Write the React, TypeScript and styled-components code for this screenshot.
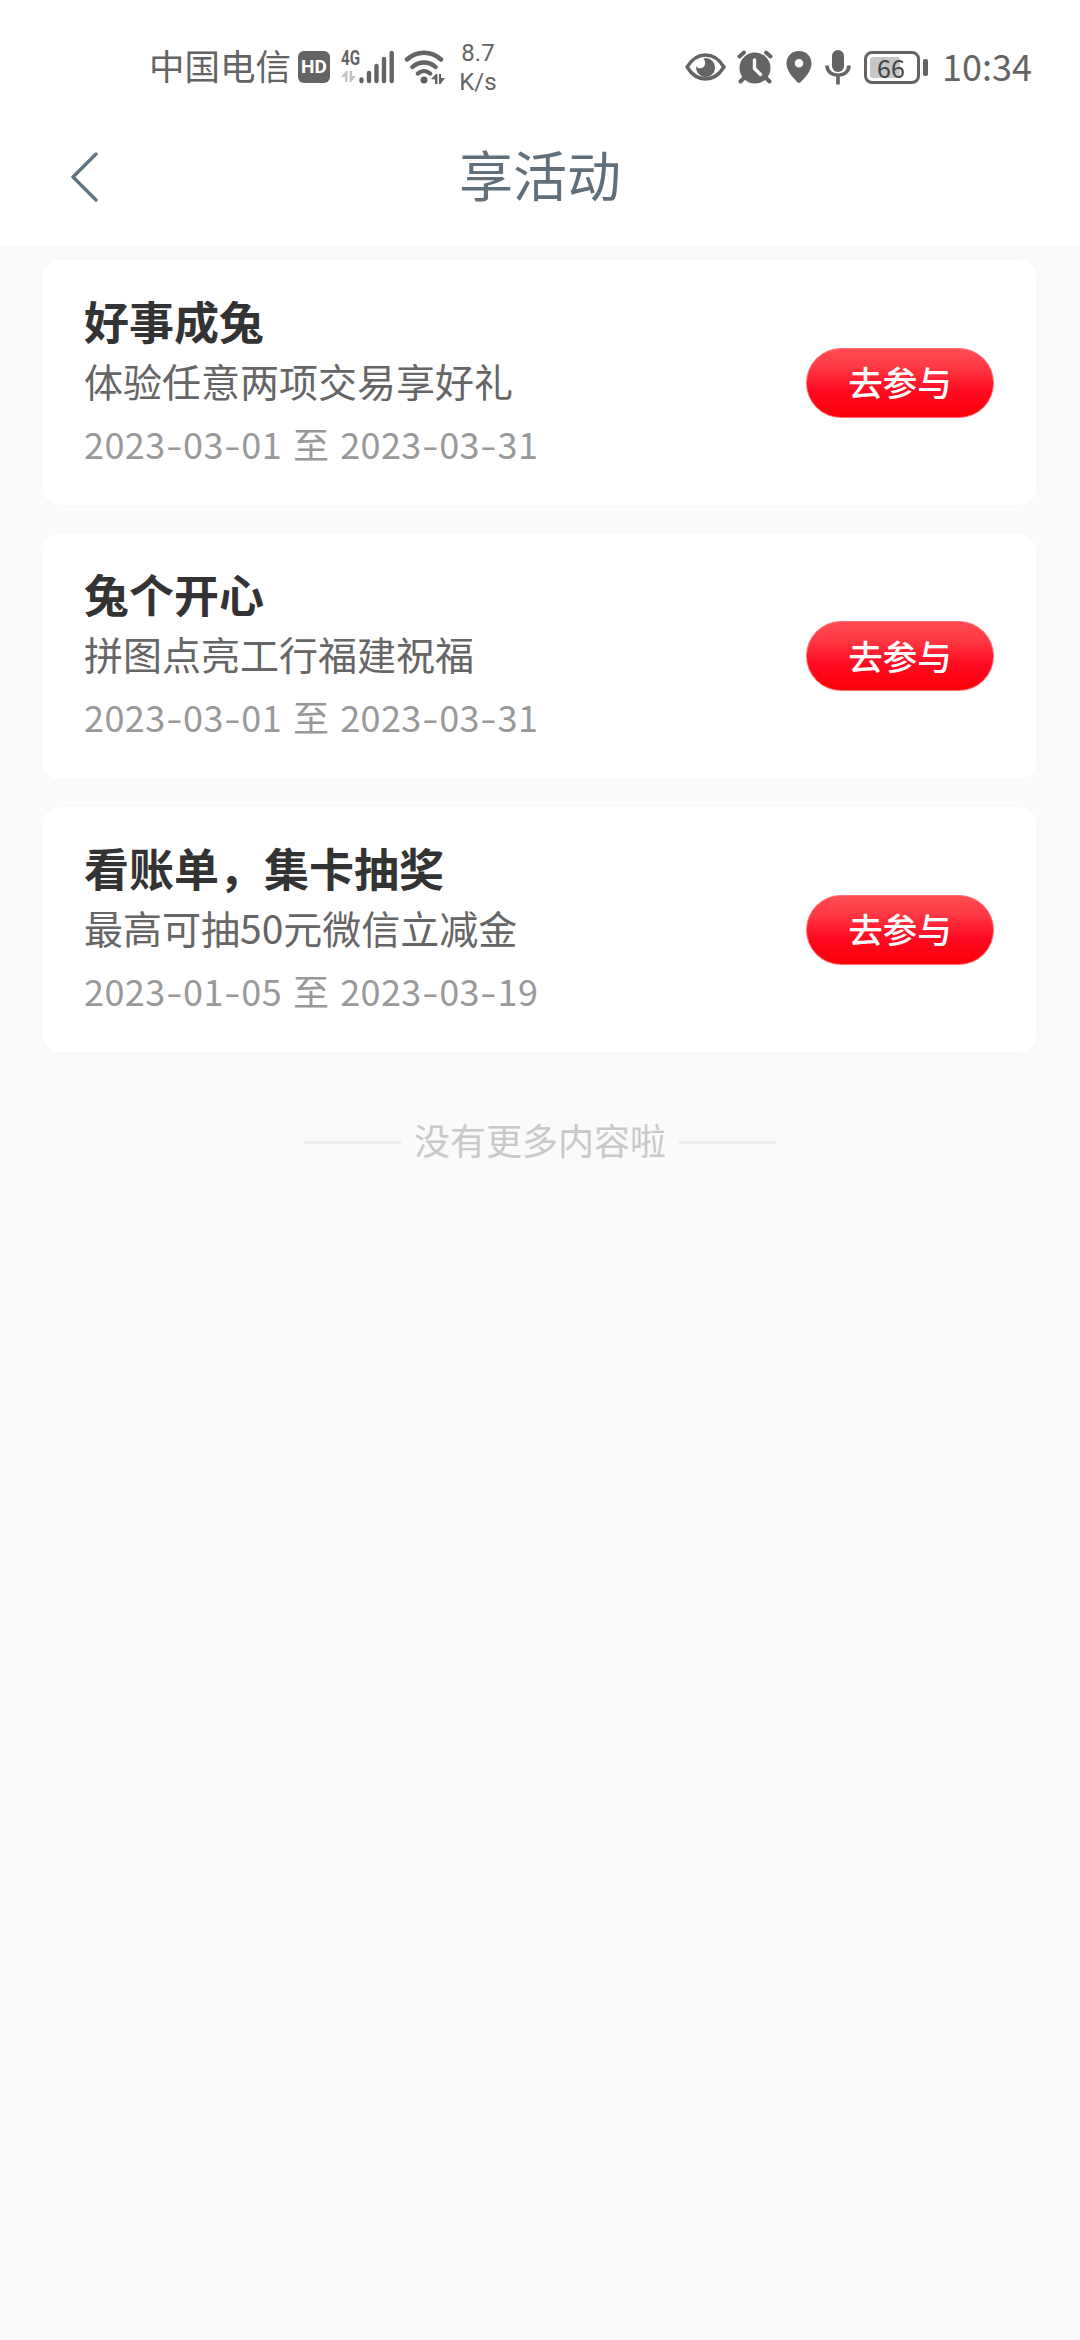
import React from "react";
import styled, { createGlobalStyle } from "styled-components";

const GlobalStyle = createGlobalStyle`
  * { box-sizing: border-box; }
  body {
    margin: 0;
    background: #fafafa;
    font-family: "Noto Sans CJK SC", "Noto Sans", sans-serif;
  }
`;

const INK = "#646464";

const Page = styled.div`
  width: 1080px;
  min-height: 2340px;
  display: flex;
  flex-direction: column;
  background: #fafafa;
`;

const Top = styled.header`
  height: 246px;
  background: #fff;
`;

const StatusBar = styled.div`
  height: 106px;
  padding: 28px 48px 0 149px;
  display: flex;
  justify-content: space-between;
  align-items: flex-start;
  color: ${INK};
`;

const StatusGroup = styled.div`
  height: 78px;
  display: flex;
  align-items: center;
`;

const StatusText = styled.span`
  font-size: 36px;
  line-height: 48px;
  white-space: nowrap;
  margin-top: -4px;
`;

const Carrier = styled(StatusText)`
  width: 149px;
  font-size: 35.5px;
`;

const Clock = styled(StatusText)`
  margin-left: 14px;
  width: 90px;
`;

const HdBadge = styled.span`
  width: 32px;
  height: 32px;
  border-radius: 6px;
  background: ${INK};
  color: #fff;
  font: 700 19px/32px Roboto, sans-serif;
  text-align: center;
`;

const SignalBlock = styled.div`
  display: flex;
  margin-left: 11px;
  width: 54px;
  height: 34px;
`;

const NetworkColumn = styled.div`
  display: flex;
  flex-direction: column;
  width: 18px;
`;

const NetworkType = styled.span`
  font: 700 20px/16px Roboto, sans-serif;
  transform: scaleX(0.76);
  transform-origin: left;
  margin-bottom: 5px;
`;

const Speed = styled.div`
  margin-left: 12px;
  margin-top: 1px;
  width: 40px;
  font: 400 24px/28.5px Roboto, sans-serif;
  text-align: center;
`;

const Icon = styled.svg<{ $left?: number }>`
  display: block;
  flex: none;
  margin-left: ${(p) => p.$left ?? 0}px;
`;

const Battery = styled.div`
  display: flex;
  align-items: center;
  margin-left: 13px;
`;

const BatteryCase = styled.div`
  width: 56px;
  height: 33px;
  padding: 3px;
  border: 3px solid ${INK};
  border-radius: 8px;
`;

const BatteryLevel = styled.div`
  width: 30px;
  height: 21px;
  border-radius: 3px;
  background: #c6c6c6;
  color: #444;
  font: 400 25px/20px "Noto Sans CJK SC", sans-serif;
  padding-left: 7px;
`;

const BatteryTip = styled.div`
  width: 5px;
  height: 17px;
  margin-left: 3px;
  border-radius: 2px;
  background: ${INK};
`;

const NavBar = styled.nav`
  height: 140px;
  display: grid;
  grid-template-columns: 150px 1fr 150px;
  align-items: center;
`;

const BackButton = styled.button`
  border: 0;
  padding: 2px 0 0 70px;
  background: none;
`;

const Title = styled.h1`
  margin: 0 0 5px;
  color: #5f707c;
  font-size: 54px;
  line-height: 80px;
  font-weight: 400;
  text-align: center;
`;

const List = styled.main`
  display: flex;
  flex-direction: column;
  gap: 28.7px;
  padding: 14px 44px 0 43px;
`;

const Card = styled.article`
  height: 245px;
  padding: 0 42px 0 41px;
  display: flex;
  align-items: center;
  justify-content: space-between;
  border-radius: 16px;
  background: #fff;
  box-shadow: 0 0 4px rgba(0, 0, 0, 0.015);
`;

const CardText = styled.div`
  display: flex;
  flex-direction: column;
  white-space: nowrap;
`;

const CardTitle = styled.h2`
  margin: 0;
  color: #333;
  font-size: 45px;
  line-height: 60px;
  font-weight: 700;
`;

const CardDescription = styled.p`
  margin: 0;
  color: #666;
  font-size: 39px;
  line-height: 58px;
`;

const CardDate = styled.p`
  margin: 0;
  padding-top: 2px;
  color: #999;
  font-size: 36px;
  line-height: 64px;
  letter-spacing: 0.4px;
  word-spacing: 2.4px;
`;

const Dash = styled.span`
  display: inline-block;
  width: 17.5px;
  text-align: center;
  transform: scaleX(1.3);
`;

const JoinButton = styled.button`
  width: 188px;
  height: 70px;
  border: 1px solid #ff6a6e;
  border-radius: 35px;
  padding: 0 0 3px;
  background: linear-gradient(180deg, #ff4b51 0%, #ff3b45 25%, #ff0a22 62%, #fb0008 100%);
  color: #fff;
  font: 500 34.5px/50px "Noto Sans CJK SC", sans-serif;
`;

const EndNote = styled.footer`
  margin-top: 60px;
  display: flex;
  align-items: center;
  justify-content: center;
  gap: 13px;
  color: #c9c9c9;
  font-size: 36px;
  line-height: 54px;

  &::before,
  &::after {
    content: "";
    width: 97px;
    height: 3px;
    margin-top: 7px;
    background: #eee;
  }
`;

const activities = [
  { title: "好事成兔", text: "体验任意两项交易享好礼", from: "2023-03-01", to: "2023-03-31" },
  { title: "兔个开心", text: "拼图点亮工行福建祝福", from: "2023-03-01", to: "2023-03-31" },
  { title: "看账单，集卡抽奖", text: "最高可抽50元微信立减金", from: "2023-01-05", to: "2023-03-19" },
];

function DateText({ value }: { value: string }) {
  return (
    <>
      {value.split("-").map((part, i) => (
        <React.Fragment key={i}>
          {i > 0 && <Dash>-</Dash>}
          {part}
        </React.Fragment>
      ))}
    </>
  );
}

function StatusIcons() {
  return (
    <>
      <Icon width="41" height="28" viewBox="0 0 41 28" fill="none">
        <path d="M2 14C7 6 13 2 20.500 2S34 6 39 14C34 22 28 26 20.500 26S7 22 2 14Z" stroke={INK} strokeWidth="3.400" strokeLinejoin="round" />
        <path d="M20.500 5a9.500 9.500 0 1 1-9.300 8c1.400 2.500 4.400 3 6.700 1.500 2.600-1.700 3.400-6 .4-8.800Z" fill={INK} />
      </Icon>
      <Icon $left={11} width="36" height="34" viewBox="0 0 36 34" fill="none" stroke={INK} strokeLinecap="round">
        <circle cx="18" cy="18" r="15.500" fill={INK} stroke="none" />
        <path d="M2.500 6.500 7 2.500M33.500 6.500 29 2.500" strokeWidth="4" />
        <path d="M7 28l-3.500 3.500M29 28l3.500 3.500" strokeWidth="4" />
        <path d="M17.500 10v8.500l6 6" stroke="#fff" strokeWidth="3.400" />
      </Icon>
      <Icon $left={13} width="26" height="32" viewBox="0 0 26 32">
        <path fillRule="evenodd" fill={INK} d="M13 0C5.500 0 .5 5.500.5 12.500.5 20 6.500 26 11.200 31q1.800 1.700 3.600 0C19.500 26 25.500 20 25.500 12.500 25.500 5.500 20.500 0 13 0Zm0 8a4 4 0 0 1 0 8.500A4 4 0 0 1 13 8Z" />
      </Icon>
      <Icon $left={13} width="26" height="35" viewBox="0 0 26 35" fill="none">
        <rect x="7" y="0" width="12" height="22" rx="6" fill={INK} />
        <path d="M2 15.500c0 13 22 13 22 0M13 26v8.500" stroke={INK} strokeWidth="3.600" />
      </Icon>
    </>
  );
}

export default function App() {
  return (
    <Page>
      <GlobalStyle />
      <Top>
        <StatusBar>
          <StatusGroup>
            <Carrier>中国电信</Carrier>
            <HdBadge>HD</HdBadge>
            <SignalBlock>
              <NetworkColumn>
                <NetworkType>4G</NetworkType>
                <Icon width="15" height="12" viewBox="0 0 15 12" fill="#c4c4c4">
                  <path d="M0 6 5 0H6.500V11H4V6ZM8.500 0H11V5H15L10 11H8.500Z" />
                </Icon>
              </NetworkColumn>
              <Icon width="36" height="34" viewBox="0 0 36 34" stroke={INK} strokeWidth="4.400" strokeLinecap="round">
                <path d="M2.500 29.500v1.500M10 23v8M17.500 16v15M25 9v22M32.700 3v28" />
              </Icon>
            </SignalBlock>
            <Icon $left={9} width="42" height="34" viewBox="0 0 42 34" fill="none" stroke={INK} strokeWidth="4.400" strokeLinecap="round">
              <path d="M3 9.500C13 .5 27 .5 37 9.500M8.500 17c6.500-6 16.500-6 23 0M14 23.500c3.500-3.200 8.500-3.200 12 0" />
              <circle cx="20" cy="30" r="3.500" fill={INK} stroke="none" />
              <path d="M27 29 32 24H33.500V34H31V29.500ZM35 24H37V28H41L36.500 34H35Z" fill={INK} stroke="none" />
            </Icon>
            <Speed>
              8.7
              <br />
              K/s
            </Speed>
          </StatusGroup>
          <StatusGroup>
            <StatusIcons />
            <Battery>
              <BatteryCase>
                <BatteryLevel>66</BatteryLevel>
              </BatteryCase>
              <BatteryTip />
            </Battery>
            <Clock>10:34</Clock>
          </StatusGroup>
        </StatusBar>
        <NavBar>
          <BackButton aria-label="返回">
            <Icon width="30" height="50" viewBox="0 0 30 50" fill="none" stroke="#5f7784" strokeWidth="3.400" strokeLinecap="round" strokeLinejoin="round">
              <path d="M26 2 3 25 26 48" />
            </Icon>
          </BackButton>
          <Title>享活动</Title>
        </NavBar>
      </Top>
      <List>
        {activities.map((a) => (
          <Card key={a.title}>
            <CardText>
              <CardTitle>{a.title}</CardTitle>
              <CardDescription>{a.text}</CardDescription>
              <CardDate>
                <DateText value={a.from} /> 至 <DateText value={a.to} />
              </CardDate>
            </CardText>
            <JoinButton>去参与</JoinButton>
          </Card>
        ))}
      </List>
      <EndNote>没有更多内容啦</EndNote>
    </Page>
  );
}
